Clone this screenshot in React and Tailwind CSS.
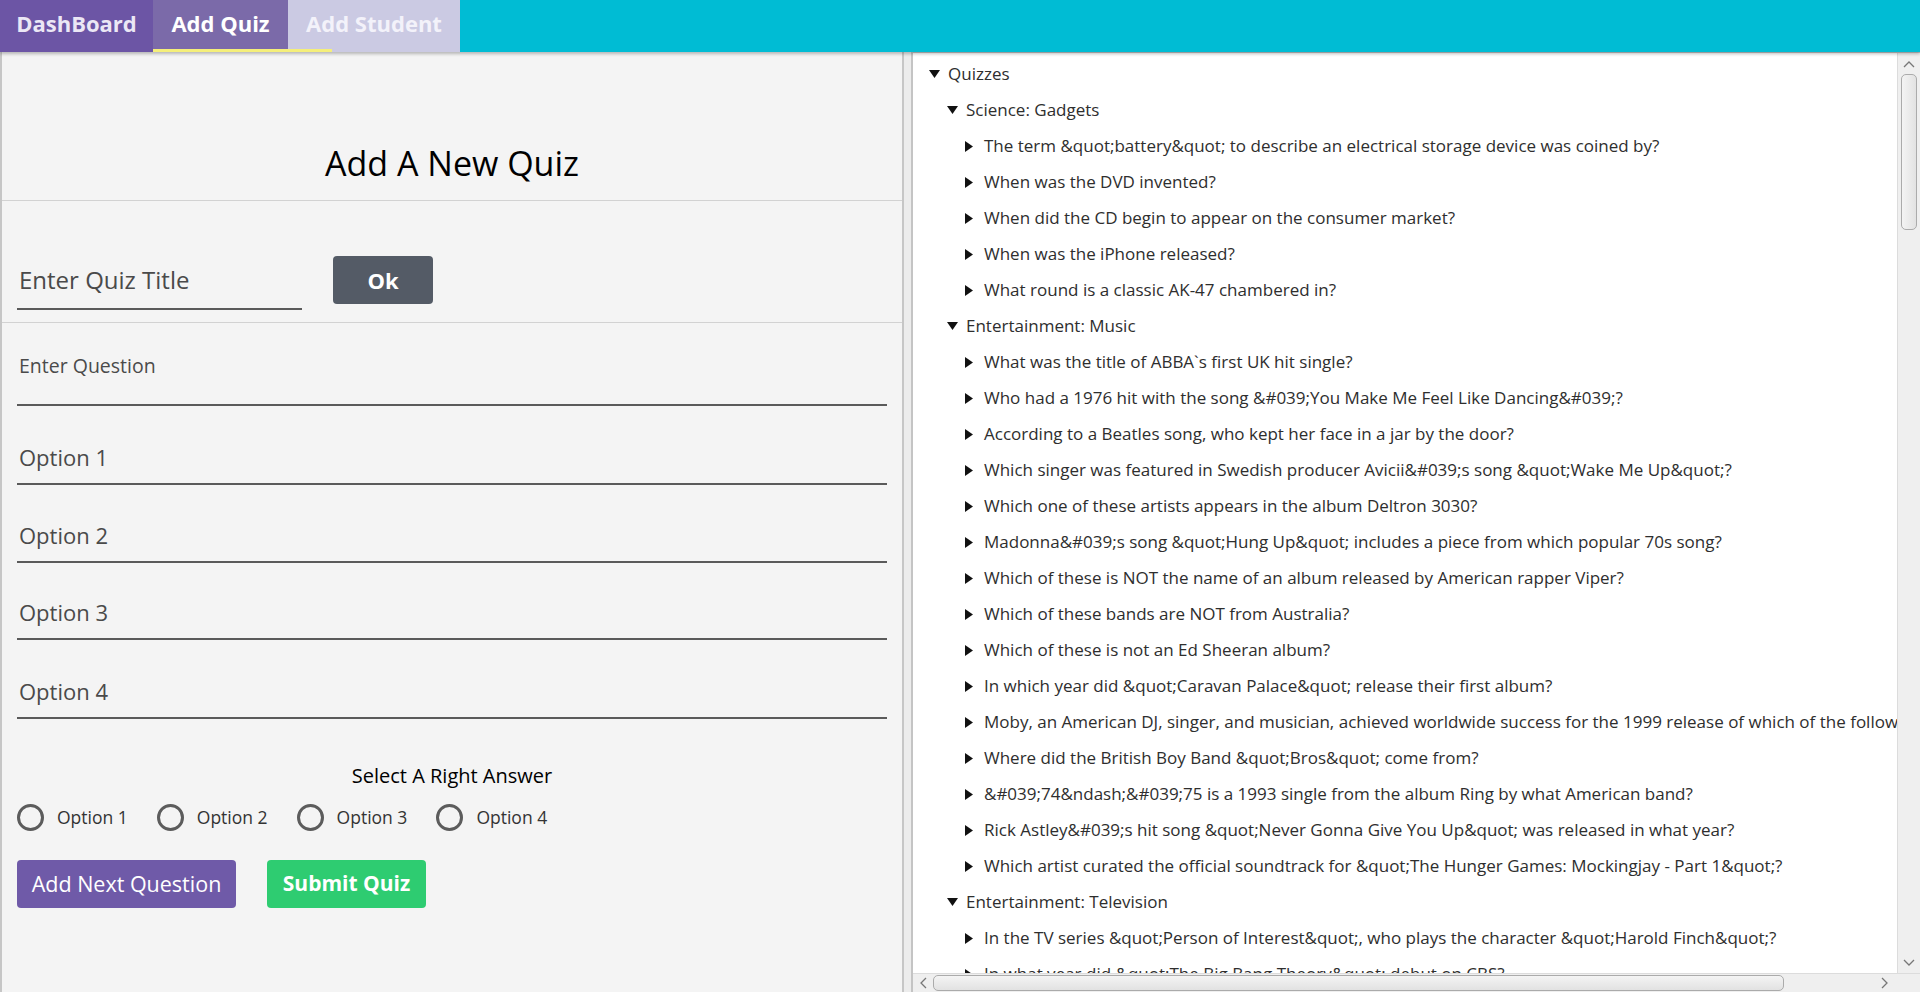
import React from 'react';

const font = { fontFamily: '"Open Sans", "Noto Sans", sans-serif' };

const tree = [
  {
    name: 'Science: Gadgets',
    items: [
      'The term &quot;battery&quot; to describe an electrical storage device was coined by?',
      'When was the DVD invented?',
      'When did the CD begin to appear on the consumer market?',
      'When was the iPhone released?',
      'What round is a classic AK-47 chambered in?',
    ],
  },
  {
    name: 'Entertainment: Music',
    items: [
      'What was the title of ABBA`s first UK hit single?',
      'Who had a 1976 hit with the song &#039;You Make Me Feel Like Dancing&#039;?',
      'According to a Beatles song, who kept her face in a jar by the door?',
      'Which singer was featured in Swedish producer Avicii&#039;s song &quot;Wake Me Up&quot;?',
      'Which one of these artists appears in the album Deltron 3030?',
      'Madonna&#039;s song &quot;Hung Up&quot; includes a piece from which popular 70s song?',
      'Which of these is NOT the name of an album released by American rapper Viper?',
      'Which of these bands are NOT from Australia?',
      'Which of these is not an Ed Sheeran album?',
      'In which year did &quot;Caravan Palace&quot; release their first album?',
      'Moby, an American DJ, singer, and musician, achieved worldwide success for the 1999 release of which of the following albums?',
      'Where did the British Boy Band &quot;Bros&quot; come from?',
      '&#039;74&ndash;&#039;75 is a 1993 single from the album Ring by what American band?',
      'Rick Astley&#039;s hit song &quot;Never Gonna Give You Up&quot; was released in what year?',
      'Which artist curated the official soundtrack for &quot;The Hunger Games: Mockingjay - Part 1&quot;?',
    ],
  },
  {
    name: 'Entertainment: Television',
    items: [
      'In the TV series &quot;Person of Interest&quot;, who plays the character &quot;Harold Finch&quot;?',
      'In what year did &quot;The Big Bang Theory&quot; debut on CBS?',
    ],
  },
];

function Arrow({ open }) {
  return (
    <span className="w-[19px] h-[36px] flex items-center shrink-0">
      {open ? (
        <svg width="11" height="8" viewBox="0 0 11 8"><path d="M0 0 L11 0 L5.5 8 Z" fill="#111" /></svg>
      ) : (
        <svg width="8" height="11" viewBox="0 0 8 11"><path d="M0 0 L8 5.5 L0 11 Z" fill="#111" /></svg>
      )}
    </span>
  );
}

function Row({ level, open, text }) {
  const pad = ['pl-[16px]', 'pl-[34px]', 'pl-[52px]'][level];
  return (
    <div className={`flex items-center h-[36px] whitespace-nowrap ${pad}`}>
      <Arrow open={open} />
      <span className="text-[17px] text-[#2e2e2e]">{text}</span>
    </div>
  );
}

function Field({ placeholder, className }) {
  return (
    <input
      placeholder={placeholder}
      className={`block w-full bg-transparent border-b-2 border-[#5a5a5a] outline-none px-[2px] text-[#444] placeholder:text-[#4a4a4a] ${className}`}
    />
  );
}

function Radio({ label }) {
  return (
    <label className="flex items-center gap-[13px]">
      <span className="w-[27px] h-[27px] rounded-full border-[3px] border-[#5c5c5c] bg-[#f4f4f4]" />
      <span className="text-[17.5px] text-[#333]">{label}</span>
    </label>
  );
}

export default function App() {
  return (
    <div className="w-[1920px] h-[992px] overflow-hidden bg-[#ececec] flex flex-col" style={font}>
      {/* header tabs */}
      <div className="h-[52px] flex bg-[#00bcd4] relative z-10 shadow-[0_2px_3px_rgba(0,0,0,0.25)] shrink-0">
        <div className="w-[153px] pb-[6px] bg-[#6c55a5] flex items-center justify-center text-[22px] font-bold text-[#ebe7f5]">DashBoard</div>
        <div className="w-[135px] pb-[6px] bg-[#7b6aa9] flex items-center justify-center text-[22px] font-bold text-white">Add Quiz</div>
        <div className="w-[172px] pb-[6px] bg-[#cbcae3] flex items-center justify-center text-[22px] font-bold text-[#f3f2fa]">Add Student</div>
        <div className="absolute left-[153px] bottom-0 w-[179px] h-[3px] bg-[#f5ef7a]" />
      </div>

      <div className="flex flex-1 min-h-0">
        {/* left form */}
        <div className="w-[904px] bg-[#f4f4f4] border-l-2 border-r-2 border-[#c6c6c6] flex flex-col">
          <div className="h-[149px] flex items-end justify-center pb-[14px] border-b border-[#d2d2d2]">
            <h1 className="text-[34px] text-black leading-[46px]">Add A New Quiz</h1>
          </div>

          <div className="h-[122px] flex items-end gap-[31px] px-[15px] pb-[12px] border-b border-[#d2d2d2]">
            <div className="w-[285px]">
              <Field placeholder="Enter Quiz Title" className="h-[48px] pb-[12px] text-[24px]" />
            </div>
            <button className="w-[100px] h-[48px] mb-[6px] rounded-[4px] bg-[#545b66] text-white text-[22px] font-bold">Ok</button>
          </div>

          <div className="px-[15px] flex flex-col">
            <Field placeholder="Enter Question" className="mt-[21px] h-[62px] pb-[18px] text-[19.5px]" />
            <Field placeholder="Option 1" className="mt-[35px] h-[44px] pb-[10px] text-[22px]" />
            <Field placeholder="Option 2" className="mt-[34px] h-[44px] pb-[10px] text-[22px]" />
            <Field placeholder="Option 3" className="mt-[33px] h-[44px] pb-[10px] text-[22px]" />
            <Field placeholder="Option 4" className="mt-[35px] h-[44px] pb-[10px] text-[22px]" />

            <div className="mt-[43px] text-center text-[20px] leading-[28px] text-black">Select A Right Answer</div>

            <div className="mt-[13px] h-[28px] flex items-center gap-[29px]">
              <Radio label="Option 1" />
              <Radio label="Option 2" />
              <Radio label="Option 3" />
              <Radio label="Option 4" />
            </div>

            <div className="mt-[29px] flex gap-[31px]">
              <button className="w-[219px] h-[48px] rounded-[4px] bg-[#6f5aa8] text-white text-[21.5px]">Add Next Question</button>
              <button className="w-[159px] h-[48px] rounded-[4px] bg-[#2ecc71] text-white text-[21px] font-bold">Submit Quiz</button>
            </div>
          </div>
        </div>

        {/* divider */}
        <div className="w-[7px] bg-[#ececec]" />

        {/* tree view */}
        <div className="flex-1 min-w-0 flex flex-col bg-white border-l-2 border-t border-[#c4c4c4]">
          <div className="flex-1 min-h-0 flex">
            <div className="flex-1 min-w-0 overflow-hidden pt-[3px]">
              <Row level={0} open text="Quizzes" />
              {tree.map((cat) => (
                <React.Fragment key={cat.name}>
                  <Row level={1} open text={cat.name} />
                  {cat.items.map((q) => (
                    <Row key={q} level={2} text={q} />
                  ))}
                </React.Fragment>
              ))}
            </div>
            {/* vertical scrollbar */}
            <div className="w-[23px] bg-[#efefef] border-l border-[#dcdcdc] flex flex-col items-center">
              <svg width="12" height="8" viewBox="0 0 12 8" className="mt-[7px]"><path d="M1 7 L6 2 L11 7" stroke="#777" strokeWidth="1.3" fill="none" /></svg>
              <div className="mt-[6px] w-[16px] h-[156px] rounded-[5px] border border-[#ababab] bg-gradient-to-r from-[#f4f4f4] to-[#e2e2e2]" />
              <div className="flex-1" />
              <svg width="12" height="8" viewBox="0 0 12 8" className="mb-[6px]"><path d="M1 1 L6 6 L11 1" stroke="#777" strokeWidth="1.3" fill="none" /></svg>
            </div>
          </div>
          {/* horizontal scrollbar */}
          <div className="h-[19px] flex bg-[#efefef] border-t border-[#dcdcdc]">
            <div className="w-[20px] flex items-center justify-center">
              <svg width="8" height="12" viewBox="0 0 8 12"><path d="M7 1 L2 6 L7 11" stroke="#777" strokeWidth="1.3" fill="none" /></svg>
            </div>
            <div className="w-[851px] h-[16px] mt-[1px] rounded-[5px] border border-[#ababab] bg-gradient-to-b from-[#f4f4f4] to-[#e2e2e2]" />
            <div className="flex-1 flex items-center justify-end pr-[8px]">
              <svg width="8" height="12" viewBox="0 0 8 12"><path d="M1 1 L6 6 L1 11" stroke="#777" strokeWidth="1.3" fill="none" /></svg>
            </div>
            <div className="w-[23px] bg-[#efefef]" />
          </div>
        </div>
      </div>
    </div>
  );
}
